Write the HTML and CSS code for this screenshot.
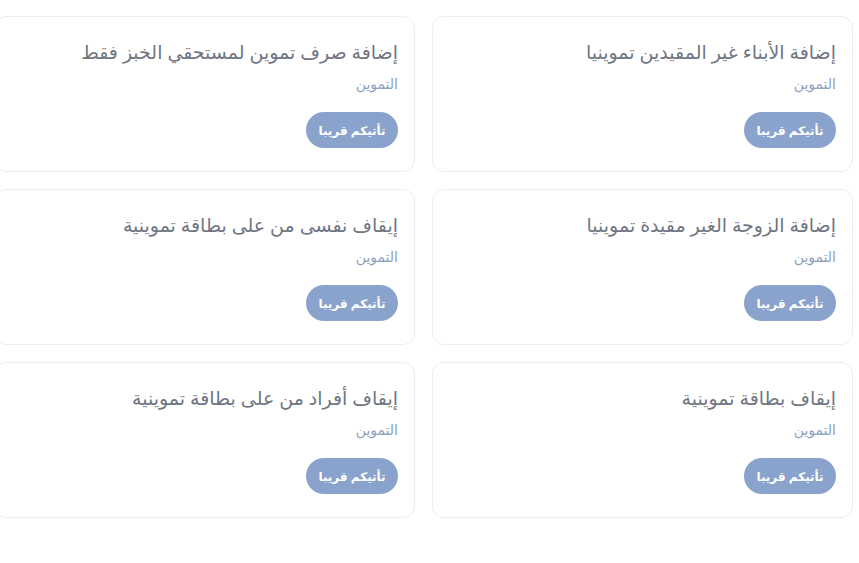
FILE: index.html
```html
<!DOCTYPE html>
<html lang="ar" dir="rtl">
<head>
<meta charset="utf-8">
<link rel="stylesheet" href="styles.css">
</head>
<body>
<main class="grid">
  <div class="card">
    <div class="title">إضافة الأبناء غير المقيدين تموينيا</div>
    <div class="sub">التموين</div>
    <div class="actions"><span class="btn">تأتيكم قريبا</span></div>
  </div>
  <div class="card">
    <div class="title">إضافة صرف تموين لمستحقي الخبز فقط</div>
    <div class="sub">التموين</div>
    <div class="actions"><span class="btn">تأتيكم قريبا</span></div>
  </div>
  <div class="card">
    <div class="title">إضافة الزوجة الغير مقيدة تموينيا</div>
    <div class="sub">التموين</div>
    <div class="actions"><span class="btn">تأتيكم قريبا</span></div>
  </div>
  <div class="card">
    <div class="title">إيقاف نفسى من على بطاقة تموينية</div>
    <div class="sub">التموين</div>
    <div class="actions"><span class="btn">تأتيكم قريبا</span></div>
  </div>
  <div class="card">
    <div class="title">إيقاف بطاقة تموينية</div>
    <div class="sub">التموين</div>
    <div class="actions"><span class="btn">تأتيكم قريبا</span></div>
  </div>
  <div class="card">
    <div class="title">إيقاف أفراد من على بطاقة تموينية</div>
    <div class="sub">التموين</div>
    <div class="actions"><span class="btn">تأتيكم قريبا</span></div>
  </div>
</main>
</body>
</html>
```

FILE: styles.css
```css
html, body {
  margin: 0;
  padding: 0;
  background: #ffffff;
  font-family: "Noto Sans", "DejaVu Sans", sans-serif;
}
.grid {
  display: grid;
  grid-template-columns: 421px 421px;
  column-gap: 17px;
  row-gap: 17px;
  padding-top: 16px;
  margin-right: 6px;
}
.card {
  border: 1px solid #eeeeee;
  border-radius: 12px;
  padding: 21px 16px 23px;
  display: flex;
  flex-direction: column;
  align-items: flex-start;
}
.title {
  font-size: 19px;
  line-height: 28px;
  color: #6f7682;
  white-space: nowrap;
}
.sub {
  margin-top: 8px;
  font-size: 14px;
  line-height: 20px;
  color: #8e9fbf;
}
.actions {
  margin-top: 18px;
  display: flex;
}
.btn {
  display: inline-flex;
  align-items: center;
  justify-content: center;
  height: 36px;
  width: 92px;
  border-radius: 18px;
  background: #8aa3cc;
  color: #ffffff;
  font-size: 12px;
  font-weight: bold;
}
```
